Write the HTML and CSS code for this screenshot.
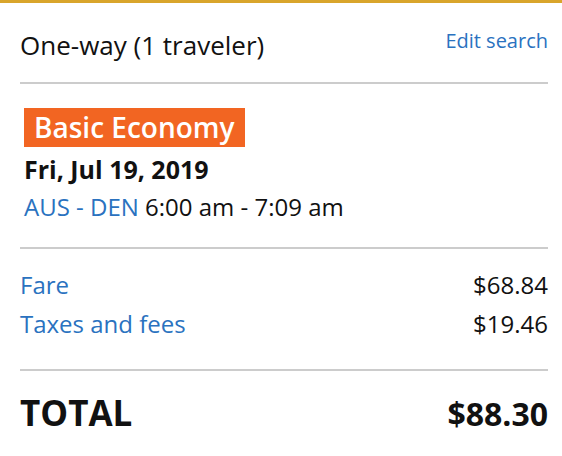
FILE: index.html
```html
<!DOCTYPE html>
<html>
<head>
<meta charset="utf-8">
<link rel="stylesheet" href="styles.css">
</head>
<body>
<div class="card">
  <div class="header">
    <div class="trip">One-way (1 traveler)</div>
    <a class="edit" href="#">Edit search</a>
  </div>
  <div class="flight">
    <div class="badge">Basic Economy</div>
    <div class="date">Fri, Jul 19, 2019</div>
    <div class="route"><span class="link">AUS - DEN</span> 6:00 am - 7:09 am</div>
  </div>
  <div class="prices">
    <div class="row"><span class="link">Fare</span><span>$68.84</span></div>
    <div class="row"><span class="link">Taxes and fees</span><span>$19.46</span></div>
  </div>
  <div class="total">
    <span class="label">TOTAL</span><span class="amount">$88.30</span>
  </div>
</div>
</body>
</html>
```
FILE: styles.css
```css
html, body {
  margin: 0;
  padding: 0;
  background: #fff;
}
body {
  font-family: "Open Sans", "DejaVu Sans", sans-serif;
  color: #111;
}
.card {
  border-top: 3px solid #d9a52b;
  padding: 0 14px 0 20px;
}
.header {
  display: flex;
  justify-content: space-between;
  align-items: flex-start;
  padding: 25px 0 20px;
  border-bottom: 2px solid #cccccc;
}
.trip {
  font-size: 26px;
  line-height: 34px;
}
.edit {
  font-size: 20px;
  line-height: 26px;
  color: #2a72bf;
  text-decoration: none;
}
.link {
  color: #2a72bf;
}
.flight {
  padding: 24px 0 19px 4px;
  border-bottom: 2px solid #cccccc;
}
.badge {
  display: inline-block;
  background: #f26522;
  color: #fff;
  font-weight: 600;
  font-size: 28px;
  line-height: 39px;
  padding: 0 10px;
}
.date {
  font-weight: 700;
  font-size: 25px;
  line-height: 34px;
  margin-top: 5px;
}
.route {
  font-size: 24px;
  line-height: 42px;
}
.prices {
  padding: 16px 0 26px;
  border-bottom: 2px solid #cccccc;
}
.row {
  display: flex;
  justify-content: space-between;
  font-size: 24px;
  line-height: 39px;
}
.total {
  display: flex;
  justify-content: space-between;
  align-items: baseline;
  padding-top: 18px;
  font-weight: 700;
  line-height: 48px;
}
.label {
  font-size: 35px;
}
.amount {
  font-size: 32px;
}
```
